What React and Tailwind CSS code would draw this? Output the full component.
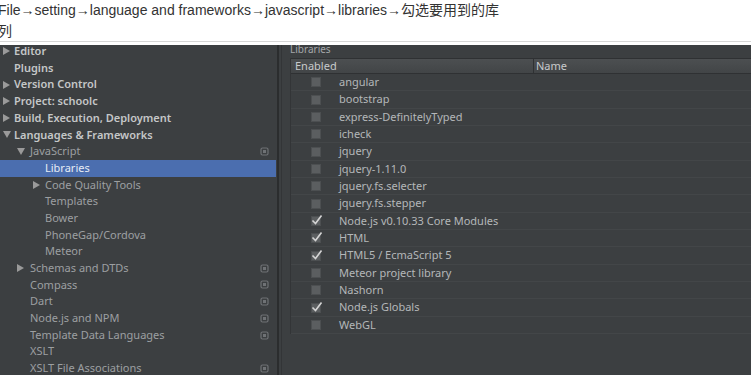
const tree = [
  { label: "Editor", depth: 0, arrow: "right", bold: true },
  { label: "Plugins", depth: 0, bold: true },
  { label: "Version Control", depth: 0, arrow: "right", bold: true },
  { label: "Project: schoolc", depth: 0, arrow: "right", bold: true },
  { label: "Build, Execution, Deployment", depth: 0, arrow: "right", bold: true },
  { label: "Languages & Frameworks", depth: 0, arrow: "down", bold: true },
  { label: "JavaScript", depth: 1, arrow: "down", icon: true },
  { label: "Libraries", depth: 2, selected: true },
  { label: "Code Quality Tools", depth: 2, arrow: "right" },
  { label: "Templates", depth: 2 },
  { label: "Bower", depth: 2 },
  { label: "PhoneGap/Cordova", depth: 2 },
  { label: "Meteor", depth: 2 },
  { label: "Schemas and DTDs", depth: 1, arrow: "right", icon: true },
  { label: "Compass", depth: 1, icon: true },
  { label: "Dart", depth: 1, icon: true },
  { label: "Node.js and NPM", depth: 1, icon: true },
  { label: "Template Data Languages", depth: 1, icon: true },
  { label: "XSLT", depth: 1 },
  { label: "XSLT File Associations", depth: 1, icon: true },
];

const libs = [
  ["angular", false],
  ["bootstrap", false],
  ["express-DefinitelyTyped", false],
  ["icheck", false],
  ["jquery", false],
  ["jquery-1.11.0", false],
  ["jquery.fs.selecter", false],
  ["jquery.fs.stepper", false],
  ["Node.js v0.10.33 Core Modules", true],
  ["HTML", true],
  ["HTML5 / EcmaScript 5", true],
  ["Meteor project library", false],
  ["Nashorn", false],
  ["Node.js Globals", true],
  ["WebGL", false],
];

const pad = ["pl-[14px]", "pl-[30px]", "pl-[45px]"];
const arrowPad = ["left-[3px]", "left-[17px]", "left-[33px]"];

function Arrow({ dir }) {
  return dir === "down" ? (
    <svg width="8" height="7" viewBox="0 0 8 7"><path d="M0 0 H8 L4 7 Z" fill="#9a9a9a" /></svg>
  ) : (
    <svg width="7" height="8" viewBox="0 0 7 8"><path d="M0 0 V8 L7 4 Z" fill="#9a9a9a" /></svg>
  );
}

function ProjIcon() {
  return (
    <svg width="9" height="9" viewBox="0 0 9 9">
      <rect x="1" y="1" width="7" height="7" rx="1.5" fill="none" stroke="#6f7275" strokeWidth="1.2" />
      <rect x="3" y="3" width="3" height="3" fill="#6f7275" />
    </svg>
  );
}

function TreeRow({ item }) {
  return (
    <div
      className={`relative flex items-center h-[16.7px] ${pad[item.depth]} ${
        item.selected ? "bg-[#4b6eaf] text-[#e6ecf5]" : item.bold ? "text-[#c5c7c8] font-semibold" : "text-[#9c9fa1]"
      }`}
    >
      {item.arrow && (
        <span className={`absolute top-0 h-full flex items-center ${arrowPad[item.depth]}`}>
          <Arrow dir={item.arrow} />
        </span>
      )}
      <span className="whitespace-nowrap">{item.label}</span>
      {item.icon && (
        <span className="absolute right-[7px] top-0 h-full flex items-center">
          <ProjIcon />
        </span>
      )}
    </div>
  );
}

function Check({ on }) {
  return (
    <div className="w-[10px] h-[10px] bg-[#5b5e60] border border-[#4c4f51] relative">
      {on && (
        <svg className="absolute -top-[3px] -left-[1px]" width="12" height="12" viewBox="0 0 12 12">
          <path d="M1.5 6.5 L4.5 9.5 L10.5 1.5" fill="none" stroke="#d4d4d4" strokeWidth="1.6" />
        </svg>
      )}
    </div>
  );
}

export default function App() {
  return (
    <div className="w-[751px] h-[375px] overflow-hidden bg-white flex flex-col" style={{ fontFamily: '"Noto Sans", "Open Sans", sans-serif' }}>
      <div className="h-[42px] border-b border-[#d6d6d6] shrink-0">
        <p
          className="ml-[-2px] w-[505px] text-[14px] leading-[21px] text-[#333]"
          style={{ fontFamily: '"Liberation Sans", Arial, "Noto Sans CJK SC", sans-serif' }}
        >
          File→setting→language and frameworks→javascript→libraries→勾选要用到的库列
        </p>
      </div>
      <div className="h-[3px] shrink-0 bg-white" />
      <div className="flex-1 flex bg-[#3c3f41] text-[11px] overflow-hidden">
        <div className="w-[277px] shrink-0 overflow-hidden border-r border-[#47627f]/0">
          <div className="mt-[-2px]">
            {tree.map((t) => (
              <TreeRow key={t.label} item={t} />
            ))}
          </div>
        </div>
        <div className="w-[2px] bg-[#2b2d2e] shrink-0" />
        <div className="w-[2px] shrink-0" />
        <div className="w-[1px] bg-[#333537] shrink-0" />
        <div className="flex-1 overflow-hidden pl-[8px]">
          <div className="mt-[-5px] h-[18px] text-[#a4a7a9] text-[10px] flex items-center">Libraries</div>
          <div className="border-l border-[#333537]">
            <div className="flex h-[16px] bg-gradient-to-b from-[#4c4f51] to-[#424547] border-y border-[#2f3133] text-[#c8cacc]">
              <div className="w-[243px] px-[4px] flex items-center border-r border-[#2f3133]">Enabled</div>
              <div className="flex-1 px-[2px] flex items-center">Name</div>
            </div>
            {libs.map(([name, on]) => (
              <div key={name} className="flex h-[17.35px] border-b border-[#434648] bg-[#3c3f41]">
                <div className="w-[48px] flex items-center justify-center pl-[2px]">
                  <Check on={on} />
                </div>
                <div className="flex items-center text-[#b4b7b9] whitespace-nowrap">{name}</div>
              </div>
            ))}
          </div>
        </div>
      </div>
    </div>
  );
}
